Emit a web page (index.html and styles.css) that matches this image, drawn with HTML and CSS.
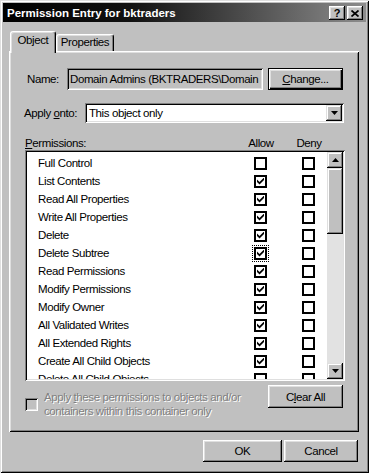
FILE: index.html
```html
<!DOCTYPE html>
<html>
<head>
<meta charset="utf-8">
<link rel="stylesheet" href="styles.css">
</head>
<body>
<div class="window">
  <div class="titlebar">
    <span class="title">Permission Entry for bktraders</span>
    <div class="tb-buttons">
      <span class="tb-btn help">?</span>
      <span class="tb-btn close"><svg width="8" height="7" viewBox="0 0 8 7"><path d="M0.5 0.5 L7.5 6.5 M7.5 0.5 L0.5 6.5" stroke="#000" stroke-width="1.7" fill="none"/></svg></span>
    </div>
  </div>
  <div class="content">
    <div class="tabs">
      <div class="tab active">Object</div>
      <div class="tab">Properties</div>
    </div>
    <div class="panel">
      <div class="name-row">
        <span class="name-label">Name:</span>
        <div class="textbox">Domain Admins (BKTRADERS\Domain</div>
        <div class="btn default"><span class="acc">C</span>hange...</div>
      </div>
      <div class="apply-row">
        <span class="apply-label">Apply <span class="acc">o</span>nto:</span>
        <div class="combo">
          <span class="combo-text">This object only</span>
          <span class="combo-btn"><svg width="7" height="4" viewBox="0 0 7 4"><path d="M0 0 H7 L3.5 4 Z" fill="#000"/></svg></span>
        </div>
      </div>
      <div class="perm-header">
        <span class="perm-label"><span class="acc">P</span>ermissions:</span>
        <span class="col-head">Allow</span>
        <span class="col-head">Deny</span>
      </div>
      <div class="list">
        <div class="rows">
          <div class="row"><span class="rtext">Full Control</span><span class="cb"></span><span class="cb"></span></div>
          <div class="row"><span class="rtext">List Contents</span><span class="cb on"></span><span class="cb"></span></div>
          <div class="row"><span class="rtext">Read All Properties</span><span class="cb on"></span><span class="cb"></span></div>
          <div class="row"><span class="rtext">Write All Properties</span><span class="cb on"></span><span class="cb"></span></div>
          <div class="row"><span class="rtext">Delete</span><span class="cb on"></span><span class="cb"></span></div>
          <div class="row"><span class="rtext">Delete Subtree</span><span class="cb on focus"></span><span class="cb"></span></div>
          <div class="row"><span class="rtext">Read Permissions</span><span class="cb on"></span><span class="cb"></span></div>
          <div class="row"><span class="rtext">Modify Permissions</span><span class="cb on"></span><span class="cb"></span></div>
          <div class="row"><span class="rtext">Modify Owner</span><span class="cb on"></span><span class="cb"></span></div>
          <div class="row"><span class="rtext">All Validated Writes</span><span class="cb on"></span><span class="cb"></span></div>
          <div class="row"><span class="rtext">All Extended Rights</span><span class="cb on"></span><span class="cb"></span></div>
          <div class="row"><span class="rtext">Create All Child Objects</span><span class="cb on"></span><span class="cb"></span></div>
          <div class="row"><span class="rtext">Delete All Child Objects</span><span class="cb"></span><span class="cb"></span></div>
        </div>
        <div class="scrollbar">
          <span class="sb-btn"><svg width="7" height="4" viewBox="0 0 7 4"><path d="M0 4 H7 L3.5 0 Z" fill="#000"/></svg></span>
          <span class="sb-thumb"></span>
          <span class="sb-track"></span>
          <span class="sb-btn"><svg width="7" height="4" viewBox="0 0 7 4"><path d="M0 0 H7 L3.5 4 Z" fill="#000"/></svg></span>
        </div>
      </div>
      <div class="bottom-row">
        <div class="apply-check">
          <span class="cb disabled"></span>
          <span class="disabled-text">Apply <span class="acc">t</span>hese permissions to objects and/or<br>containers within this container only</span>
        </div>
        <div class="btn clear">C<span class="acc">l</span>ear All</div>
      </div>
    </div>
    <div class="footer">
      <div class="btn ok">OK</div>
      <div class="btn cancel">Cancel</div>
    </div>
  </div>
</div>
</body>
</html>
```
FILE: styles.css
```css
* { box-sizing: border-box; }
html, body { margin: 0; padding: 0; }
body {
  background: #c0c0c0;
  font-family: "Liberation Sans", Arial, sans-serif;
  font-size: 11.5px;
  letter-spacing: -0.4px;
  color: #000;
}
.acc { text-decoration: underline; text-underline-offset: 1px; }

.window {
  width: 369px;
  height: 473px;
  background: #c0c0c0;
  padding: 3px;
  display: flex;
  flex-direction: column;
  box-shadow: inset 1px 1px #dfdfdf, inset -1px -1px #000, inset 2px 2px #fff, inset -2px -2px #808080;
}

.titlebar {
  height: 19px;
  flex: none;
  display: flex;
  align-items: center;
  justify-content: space-between;
  padding: 0 3px 0 4px;
  background: linear-gradient(to right, #000 0%, #111 35%, #8c8c8c 100%);
}
.title {
  color: #fff;
  font-weight: bold;
  font-size: 11.5px;
  letter-spacing: 0;
}
.tb-buttons { display: flex; gap: 2px; margin-top: 1px; }
.tb-btn {
  width: 16px;
  height: 14px;
  background: #c0c0c0;
  display: flex;
  align-items: center;
  justify-content: center;
  box-shadow: inset -1px -1px #000, inset 1px 1px #fff, inset -2px -2px #808080, inset 2px 2px #dfdfdf;
}
.tb-btn.help {
  font-weight: bold;
  font-size: 11px;
  letter-spacing: 0;
  line-height: 14px;
  padding-bottom: 1px;
}

.content {
  flex: 1;
  display: flex;
  flex-direction: column;
  padding: 9px 7px 0 6px;
}

.tabs {
  height: 20px;
  display: flex;
  align-items: flex-end;
  margin-left: 1px;
  position: relative;
  z-index: 1;
}
.tab {
  height: 17px;
  width: 58px;
  text-align: center;
  line-height: 14px;
  background: #c0c0c0;
  border: 1px solid;
  border-bottom: none;
  border-color: #fff #000 transparent #fff;
  border-radius: 3px 3px 0 0;
  box-shadow: inset -1px 0 #808080, inset 1px 1px #dfdfdf;
}
.tab.active {
  width: 46px;
  height: 22px;
  padding-top: 1px;
  margin-bottom: -2px;
}

.panel {
  height: 381px;
  flex: none;
  padding: 17px 14px 0 16px;
  display: flex;
  flex-direction: column;
  box-shadow: inset 1px 1px #fff, inset -1px -1px #000, inset 2px 2px #dfdfdf, inset -2px -2px #808080;
}

.name-row {
  height: 22px;
  display: flex;
  align-items: center;
}
.name-label {
  width: 42px;
  padding-left: 2px;
}
.textbox {
  width: 196px;
  height: 22px;
  line-height: 22px;
  padding: 0 3px;
  white-space: nowrap;
  overflow: hidden;
  background: #c0c0c0;
  box-shadow: inset 1px 1px #808080, inset -1px -1px #fff, inset 2px 2px #000, inset -2px -2px #dfdfdf;
}

.btn {
  display: flex;
  align-items: center;
  justify-content: center;
  white-space: pre;
  background: #c0c0c0;
  box-shadow: inset -1px -1px #000, inset 1px 1px #fff, inset -2px -2px #808080, inset 2px 2px #dfdfdf;
}
.btn.default {
  width: 75px;
  height: 22px;
  margin-left: 5px;
  box-shadow: inset 0 0 0 1px #000, inset 2px 2px #fff, inset -2px -2px #000, inset -3px -3px #808080, inset 3px 3px #dfdfdf;
}

.apply-row {
  height: 20px;
  margin-top: 13px;
  display: flex;
  align-items: center;
}
.apply-label {
  width: 61px;
  margin-left: -1px;
}
.combo {
  flex: 1;
  height: 20px;
  margin-right: 1px;
  display: flex;
  align-items: center;
  padding: 2px;
  background: #fff;
  box-shadow: inset 1px 1px #808080, inset -1px -1px #fff, inset 2px 2px #000, inset -2px -2px #dfdfdf;
}
.combo-text {
  flex: 1;
  padding-left: 2px;
}
.combo-btn {
  width: 16px;
  height: 16px;
  display: flex;
  align-items: center;
  justify-content: center;
  background: #c0c0c0;
  box-shadow: inset -1px -1px #000, inset 1px 1px #dfdfdf, inset -2px -2px #808080, inset 2px 2px #fff;
}

.perm-header {
  height: 14px;
  margin-top: 13px;
  line-height: 14px;
  display: flex;
  padding-right: 21px;
}
.perm-label { flex: 1; }
.col-head {
  width: 30px;
  text-align: center;
}
.col-head + .col-head { margin-left: 18px; }

.list {
  height: 231px;
  display: flex;
  padding: 2px;
  background: #fff;
  box-shadow: inset 1px 1px #808080, inset -1px -1px #fff, inset 2px 2px #000, inset -2px -2px #dfdfdf;
}
.rows {
  flex: 1;
  overflow: hidden;
  padding-top: 2px;
}
.row {
  height: 18px;
  display: flex;
  align-items: center;
  padding-left: 11px;
  padding-right: 12px;
  white-space: nowrap;
}
.rtext { flex: 1; }
.cb {
  width: 13px;
  height: 13px;
  flex: none;
  background: #fff;
  border: 2px solid #000;
  position: relative;
}
.row .cb + .cb { margin-left: 35px; }
.cb.on::after {
  content: "";
  position: absolute;
  left: 1px;
  top: 1px;
  width: 7px;
  height: 7px;
  background: #000;
  clip-path: polygon(0 28%, 36% 64%, 100% 0, 100% 36%, 36% 100%, 0 64%);
}
.cb.focus {
  outline: 1px dotted #000;
  outline-offset: 1px;
}

.scrollbar {
  width: 16px;
  display: flex;
  flex-direction: column;
  background: #e2e2e2;
}
.sb-btn {
  height: 16px;
  flex: none;
  display: flex;
  align-items: center;
  justify-content: center;
  background: #c0c0c0;
  box-shadow: inset -1px -1px #000, inset 1px 1px #dfdfdf, inset -2px -2px #808080, inset 2px 2px #fff;
}
.sb-thumb {
  height: 66px;
  flex: none;
  background: #c0c0c0;
  box-shadow: inset -1px -1px #000, inset 1px 1px #dfdfdf, inset -2px -2px #808080, inset 2px 2px #fff;
}
.sb-track { flex: 1; }

.bottom-row {
  margin-top: 4px;
  display: flex;
  justify-content: space-between;
  align-items: flex-start;
}
.apply-check {
  margin-top: 5px;
  display: flex;
  align-items: center;
  gap: 6px;
}
.cb.disabled {
  background: #c0c0c0;
  border: none;
  box-shadow: inset 1px 1px #808080, inset -1px -1px #fff, inset 2px 2px #000, inset -2px -2px #dfdfdf;
}
.disabled-text {
  color: #808080;
  text-shadow: 1px 1px #fff;
  line-height: 14px;
}
.btn.clear {
  width: 75px;
  height: 23px;
  margin-right: 2px;
}

.footer {
  margin-top: 8px;
  display: flex;
  justify-content: flex-end;
  gap: 2px;
  margin-right: 1px;
}
.btn.ok { width: 79px; height: 22px; }
.btn.cancel { width: 74px; height: 22px; }
```
